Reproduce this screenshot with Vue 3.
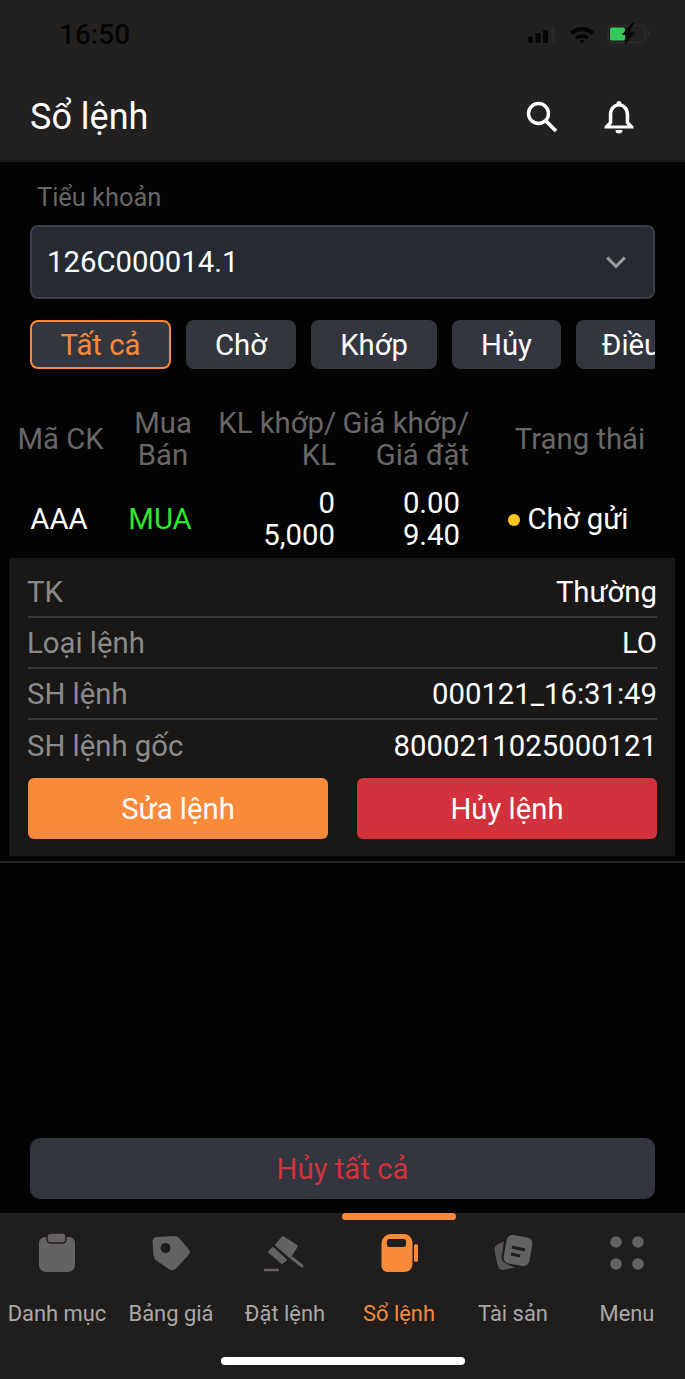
<script setup>
const filters = [
  { label: "Tất cả", width: 141, active: true },
  { label: "Chờ", width: 110 },
  { label: "Khớp", width: 126 },
  { label: "Hủy", width: 109 },
  { label: "Điều", width: 110 },
]

const details = [
  { label: "TK", value: "Thường" },
  { label: "Loại lệnh", value: "LO" },
  { label: "SH lệnh", value: "000121_16:31:49" },
  { label: "SH lệnh gốc", value: "8000211025000121" },
]

const tabs = [
  { label: "Danh mục", icon: "list" },
  { label: "Bảng giá", icon: "tag" },
  { label: "Đặt lệnh", icon: "gavel" },
  { label: "Sổ lệnh", icon: "book", active: true },
  { label: "Tài sản", icon: "cards" },
  { label: "Menu", icon: "menu" },
]
</script>

<template>
  <div class="page">
    <header class="top">
      <div class="status">
        <span class="time">16:50</span>
        <div class="status-icons">
          <svg width="30" height="20" viewBox="0 0 30 20">
            <rect x="1" y="12.500" width="5" height="6.500" rx="2" fill="#050505" />
            <rect x="8.500" y="9" width="5" height="10" rx="1.500" fill="#050505" />
            <rect x="16" y="6" width="5" height="13" rx="1.500" fill="#050505" />
            <rect x="24" y="3" width="4" height="16" rx="1.500" fill="#2c2a29" />
          </svg>
          <svg width="26" height="19" viewBox="0 0 28 20">
            <path d="M1 7 A19 19 0 0 1 27 7 L24 10.500 A14.500 14.500 0 0 0 4 10.500 Z" fill="#050505" />
            <path d="M6.500 12.500 A11 11 0 0 1 21.500 12.500 L18.800 15.500 A7 7 0 0 0 9.200 15.500 Z" fill="#050505" />
            <path d="M11 17 A4.500 4.500 0 0 1 17 17 L14 20 Z" fill="#050505" />
          </svg>
          <svg width="44" height="22" viewBox="0 0 44 22">
            <rect x="1" y="2.500" width="37" height="17" rx="4.500" fill="none" stroke="#2e2c2b" stroke-width="1.500" />
            <rect x="3" y="4.500" width="15" height="13" rx="2" fill="#34c759" />
            <path d="M40.500 8.500 v5 a2.500 2.500 0 0 0 0 -5 Z" fill="#2e2c2b" />
            <path d="M25 0 L14.500 12 H20 L17.500 22 L28 9.500 H22.500 L27 0 Z" fill="#080808" />
          </svg>
        </div>
      </div>
      <div class="titlebar">
        <h1>Sổ lệnh</h1>
        <div class="actions">
          <svg width="34" height="34" viewBox="0 0 34 34" fill="none" stroke="#fff">
            <circle cx="13.500" cy="13.500" r="10" stroke-width="3.400" />
            <path d="M20.500 20.500 L31 31" stroke-width="3.800" />
          </svg>
          <svg width="32" height="36" viewBox="0 0 32 36" fill="#fff">
            <path d="M16 2 a2.400 2.400 0 0 1 2.400 2.600 C23.800 6 26.200 11 26.200 16 V23 L30.500 27.500 V29.500 H1.500 V27.500 L5.800 23 V16 C5.800 11 8.200 6 13.600 4.600 A2.400 2.400 0 0 1 16 2 Z M16 7.500 C11.500 7.500 9.300 12 9.300 16 V24.200 L7.200 26.500 H24.800 L22.700 24.200 V16 C22.700 12 20.500 7.500 16 7.500 Z" fill-rule="evenodd" />
            <path d="M12.500 31 H19.500 A3.500 3.500 0 0 1 12.500 31 Z" />
          </svg>
        </div>
      </div>
    </header>

    <main class="content">
      <div class="account">
        <label class="account-label">Tiểu khoản</label>
        <div class="select">
          <span>126C000014.1</span>
          <svg width="22" height="14" viewBox="0 0 24 16" fill="none" stroke="#9a9a9a" stroke-width="3.500">
            <path d="M2 3 L12 13 L22 3" />
          </svg>
        </div>
        <div class="filters">
          <button
            v-for="f in filters"
            :key="f.label"
            class="filter"
            :class="{ active: f.active }"
            :style="{ width: f.width + 'px' }"
          >
            {{ f.label }}
          </button>
        </div>
      </div>

      <div class="table-row table-head">
        <div class="col-code">Mã CK</div>
        <div class="col-side">Mua<br />Bán</div>
        <div class="col-qty">KL khớp/<br />KL</div>
        <div class="col-price">Giá khớp/<br />Giá đặt</div>
        <div class="col-state">Trạng thái</div>
      </div>

      <div class="table-row table-body">
        <div class="col-code">AAA</div>
        <div class="col-side buy">MUA</div>
        <div class="col-qty">0<br />5,000</div>
        <div class="col-price">0.00<br />9.40</div>
        <div class="col-state"><i class="dot"></i>Chờ gửi</div>
      </div>

      <section class="detail">
        <div v-for="d in details" :key="d.label" class="detail-row">
          <span class="detail-label">{{ d.label }}</span>
          <span class="detail-value">{{ d.value }}</span>
        </div>
        <div class="detail-buttons">
          <button class="btn edit">Sửa lệnh</button>
          <button class="btn cancel">Hủy lệnh</button>
        </div>
      </section>
      <div class="divider"></div>

      <div class="spacer"></div>
      <button class="cancel-all">Hủy tất cả</button>
    </main>

    <nav class="tabbar">
      <div v-for="t in tabs" :key="t.label" class="tab" :class="{ active: t.active }">
        <span v-if="t.active" class="tab-mark"></span>
        <svg class="tab-icon" width="44" height="44" viewBox="0 0 44 44">
          <template v-if="t.icon === 'list'">
            <path d="M10 6 H34 A6 6 0 0 1 40 12 V34 A7 7 0 0 1 33 41 H11 A7 7 0 0 1 4 34 V12 A6 6 0 0 1 10 6 Z" fill="#646262" />
            <rect x="12" y="2" width="19" height="10" rx="3.500" fill="#646262" stroke="#201e1d" stroke-width="1.500" />
          </template>
          <template v-else-if="t.icon === 'tag'">
            <path d="M8 6 L25 5 Q28 5 30 7 L39.500 18 Q42 21 39.500 24 L27 37.500 Q24 40.500 20.500 38.500 L8 30 Q5 28 4.500 24 L3.500 11 Q3.500 6.500 8 6 Z" fill="#646262" />
            <circle cx="16.500" cy="17" r="5" fill="#1e1c1b" />
          </template>
          <template v-else-if="t.icon === 'gavel'">
            <path d="M20 6 L34 15 L27 26 L13 14 Z" fill="#646262" stroke="#646262" stroke-width="2" stroke-linejoin="round" />
            <path d="M10 17 L23 29 L19 32 L6 21 Z" fill="#646262" stroke="#646262" stroke-width="2" stroke-linejoin="round" />
            <path d="M29 27 L39 35" stroke="#646262" stroke-width="3" stroke-linecap="round" />
            <path d="M1 39 H16" stroke="#646262" stroke-width="2.500" />
          </template>
          <template v-else-if="t.icon === 'book'">
            <path d="M14 3 H27 A8.500 8.500 0 0 1 35.500 11.500 V33 A8 8 0 0 1 27.500 41 H10.500 A6 6 0 0 1 4.500 35 V12.500 A9.500 9.500 0 0 1 14 3 Z" fill="#f98a3a" />
            <rect x="10" y="8" width="19" height="8" rx="2.500" fill="#201e1d" />
            <rect x="37" y="13" width="4" height="18" rx="2" fill="#f98a3a" />
          </template>
          <template v-else-if="t.icon === 'cards'">
            <path d="M13 10 L6 14 Q3 15.500 3.500 19 L6.500 34 Q8 39 12 39 L24 36.500 Q18 34 14 32 Q10.500 30 10.500 26 Z" fill="#595756" />
            <rect x="14" y="5" width="26" height="29" rx="6" transform="rotate(10 27 19.500)" fill="#646262" />
            <path d="M21 16 L34 19 M20 23 L29 25" stroke="#201e1d" stroke-width="3" />
          </template>
          <template v-else>
            <circle cx="11" cy="11" r="5.800" fill="#646262" />
            <circle cx="33" cy="11" r="5.800" fill="#646262" />
            <circle cx="11" cy="33" r="5.800" fill="#646262" />
            <circle cx="33" cy="33" r="5.800" fill="#646262" />
          </template>
        </svg>
        <span class="tab-label">{{ t.label }}</span>
      </div>
      <span class="home-bar"></span>
    </nav>
  </div>
</template>

<style>
html,
body {
  background: #030303;
}
</style>

<style scoped>
.page {
  width: 685px;
  height: 1379px;
  overflow: hidden;
  display: flex;
  flex-direction: column;
  background: #030303;
  font-family: Roboto, "Noto Sans", sans-serif;
  color: #fff;
}

.top {
  height: 162px;
  flex: none;
  background: #232120;
  box-sizing: border-box;
  border-bottom: 2px solid #1b1a19;
}

.status {
  height: 68px;
  display: flex;
  justify-content: space-between;
  align-items: center;
  padding: 0 34px 0 59px;
}

.time {
  font-size: 28px;
  font-weight: 500;
  color: #050505;
}

.status-icons {
  display: flex;
  align-items: center;
  gap: 12px;
}

.titlebar {
  height: 92px;
  display: flex;
  align-items: center;
  justify-content: space-between;
  padding: 0 50px 0 30px;
}

h1 {
  margin: 0;
  font-size: 36px;
  font-weight: 400;
  position: relative;
  top: 3px;
}

.actions {
  display: flex;
  align-items: center;
  gap: 44px;
  position: relative;
  top: 3px;
}

.content {
  flex: 1;
  display: flex;
  flex-direction: column;
  min-height: 0;
}

.account {
  padding: 19px 30px 0;
}

.account-label {
  display: block;
  padding-left: 7px;
  height: 33px;
  font-size: 25.4px;
  line-height: 33px;
  color: #676767;
}

.select {
  margin-top: 11px;
  height: 74px;
  box-sizing: border-box;
  border: 2px solid #3c3f47;
  border-radius: 8px;
  background: #262a33;
  display: flex;
  align-items: center;
  justify-content: space-between;
  padding: 0 26px 0 15px;
  font-size: 29.3px;
}

.filters {
  margin-top: 21px;
  display: flex;
  gap: 15px;
  overflow: hidden;
}

.filter {
  flex: none;
  height: 49px;
  box-sizing: border-box;
  border: 0;
  border-radius: 8px;
  background: #33363f;
  color: #fff;
  font: inherit;
  font-size: 29.3px;
  padding: 0;
  white-space: nowrap;
}

.filter.active {
  border: 2px solid #f98a3a;
  color: #f98a3a;
}

.table-row {
  display: grid;
  grid-template-columns: 121px 84px 131px 133px 1fr;
  align-items: center;
  font-size: 29.3px;
  line-height: 32px;
}

.table-head {
  margin-top: 38px;
  height: 64px;
  color: #676767;
}

.table-body {
  margin-top: 16px;
  height: 64px;
}

.col-code,
.col-side {
  text-align: center;
}

.col-qty,
.col-price {
  text-align: right;
  white-space: nowrap;
}

.col-state {
  text-align: center;
  white-space: nowrap;
  padding-left: 6px;
}

.table-body .col-code {
  padding-right: 3px;
}

.table-body .col-qty {
  padding-right: 1px;
}

.table-body .col-price {
  padding-right: 9px;
}

.table-body .col-state {
  padding-left: 0;
  padding-right: 18px;
}

.buy {
  color: #2de82d;
  padding-right: 6px;
}

.dot {
  display: inline-block;
  width: 12px;
  height: 12px;
  border-radius: 50%;
  background: #ffc81e;
  margin-right: 8px;
  vertical-align: 3px;
}

.detail {
  margin: 7px 10px 0 9px;
  height: 298px;
  box-sizing: border-box;
  background: #191817;
  padding: 9px 18px 0 19px;
}

.detail-row {
  height: 51px;
  box-sizing: border-box;
  display: flex;
  justify-content: space-between;
  align-items: center;
  font-size: 29.3px;
  border-bottom: 2px solid #3a3938;
  color: #fff;
}

.detail-row:nth-child(4) {
  border-bottom: 0;
}

.detail-label {
  color: #8b8b8b;
  margin-left: -1px;
}

.detail-buttons {
  margin-top: 7px;
  display: flex;
  justify-content: space-between;
}

.btn {
  width: 300px;
  height: 61px;
  border: 0;
  border-radius: 6px;
  color: #fff;
  font: inherit;
  font-size: 29.3px;
  padding: 0;
}

.edit {
  background: #f98a3a;
}

.cancel {
  background: #d1323c;
}

.divider {
  margin-top: 5px;
  height: 2px;
  background: #252423;
}

.spacer {
  flex: 1;
}

.cancel-all {
  flex: none;
  margin: 0 30px 14px;
  height: 61px;
  border: 0;
  border-radius: 10px;
  background: #33363f;
  color: #d1323c;
  font: inherit;
  font-size: 29.3px;
  padding: 0;
}

.tabbar {
  position: relative;
  flex: none;
  height: 166px;
  background: #201e1d;
  display: grid;
  grid-template-columns: repeat(6, 114px);
}

.tab {
  position: relative;
  display: flex;
  flex-direction: column;
  align-items: center;
  padding-top: 18px;
  color: #a9a9a9;
}

.tab.active {
  color: #f98a3a;
}

.tab-icon {
  display: block;
}

.tab-label {
  margin-top: 25px;
  font-size: 21.9px;
  line-height: 28px;
  white-space: nowrap;
}

.tab-mark {
  position: absolute;
  top: 0;
  left: 0;
  width: 114px;
  height: 7px;
  border-radius: 4px;
  background: #f98a3a;
}

.home-bar {
  position: absolute;
  left: 221px;
  top: 144px;
  width: 244px;
  height: 8px;
  border-radius: 4px;
  background: #fff;
}
</style>
